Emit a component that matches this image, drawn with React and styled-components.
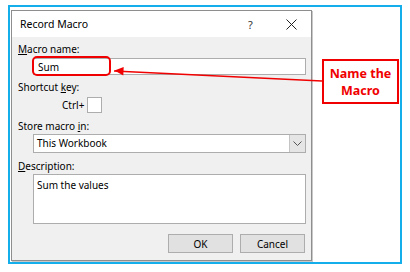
import React from 'react'
import styled, { createGlobalStyle } from 'styled-components'

const GlobalStyle = createGlobalStyle`
    html, body {
        margin: 0;
        background: #ffffff;
    }
    body {
        font-family: "Noto Sans", "Open Sans", sans-serif;
        color: #000000;
    }
`

function App() {
    return (
        <>
            <GlobalStyle />
            <Frame>
                <Dialog>
                    <TitleBar>
                        <Title>Record Macro</Title>
                        <Help>?</Help>
                        <Close>
                            <svg width="11" height="11" viewBox="0 0 11 11">
                                <path d="M0.5 0.5 L10.5 10.5 M10.5 0.5 L0.5 10.5" stroke="#222" strokeWidth="1" fill="none" />
                            </svg>
                        </Close>
                    </TitleBar>
                    <Body>
                        <Label><u>M</u>acro name:</Label>
                        <TextBox readOnly value="Sum" />
                        <Label $gap={6}>Shortcut <u>k</u>ey:</Label>
                        <CtrlRow>
                            <span>Ctrl+</span>
                            <KeyBox />
                        </CtrlRow>
                        <Label $gap={7}>Store macro <u>i</u>n:</Label>
                        <Select>
                            <SelectValue>This Workbook</SelectValue>
                            <DropButton>
                                <svg width="9" height="6" viewBox="0 0 9 6">
                                    <path d="M0.5 0.5 L4.5 4.5 L8.5 0.5" stroke="#555" strokeWidth="1" fill="none" />
                                </svg>
                            </DropButton>
                        </Select>
                        <Label $gap={7}><u>D</u>escription:</Label>
                        <TextArea readOnly value="Sum the values" />
                        <Buttons>
                            <Button>OK</Button>
                            <Button>Cancel</Button>
                        </Buttons>
                    </Body>
                </Dialog>
                <Callout>
                    <span>Name the</span>
                    <span>Macro</span>
                </Callout>
                <Annotation width="390" height="256" viewBox="10 7 390 256">
                    <rect x="33" y="57" width="77" height="18" rx="4" ry="4" fill="none" stroke="#f00000" strokeWidth="2" />
                    <line x1="114" y1="71" x2="322" y2="81" stroke="#f00000" strokeWidth="1.5" />
                    <polygon points="114.5,70.5 123.7,66.9 123.3,75.4" fill="#f00000" />
                </Annotation>
            </Frame>
        </>
    )
}

export default App

const Frame = styled.div`
    position: relative;
    box-sizing: border-box;
    width: 394px;
    height: 259px;
    margin: 5px 0 0 8px;
    border: 2px solid #14aeea;
    padding: 3px 0 0 1px;
    display: flex;
    align-items: flex-start;
    gap: 10px;
`

const Dialog = styled.div`
    box-sizing: border-box;
    width: 301px;
    height: 251px;
    border: 1px solid #8e8e8e;
    box-shadow: 1px 1px 0 #c8c8c8;
    background: #f0f0f0;
    display: flex;
    flex-direction: column;
    font-size: 10px;
`

const TitleBar = styled.div`
    height: 26px;
    background: #ffffff;
    display: flex;
    align-items: center;
    padding-left: 8px;
`

const Title = styled.div`
    font-size: 10.5px;
    flex: 1;
`

const Help = styled.div`
    font-size: 11px;
    color: #333;
    width: 6px;
    margin-right: 32px;
`

const Close = styled.div`
    display: flex;
    margin-right: 14px;
`

const Body = styled.div`
    flex: 1;
    display: flex;
    flex-direction: column;
    padding: 6px 5px 0 6px;
`

const Label = styled.div`
    height: 13px;
    line-height: 13px;
    margin-top: ${p => p.$gap || 0}px;
    margin-bottom: ${p => (p.$gap ? 0 : 2)}px;
`

const TextBox = styled.input`
    box-sizing: border-box;
    margin: 0 0 0 15px;
    height: 17px;
    border: 1px solid #adadad;
    background: #fff;
    padding: 0 4px;
    font: inherit;
    font-size: 10px;
    outline: none;
`

const CtrlRow = styled.div`
    display: flex;
    align-items: center;
    gap: 3px;
    margin: 3px 0 0 44px;
    height: 16px;
`

const KeyBox = styled.div`
    box-sizing: border-box;
    width: 15px;
    height: 16px;
    border: 1px solid #adadad;
    background: #fff;
`

const Select = styled.div`
    box-sizing: border-box;
    margin: 1px 0 0 15px;
    height: 19px;
    border: 1px solid #adadad;
    background: #fff;
    display: flex;
`

const SelectValue = styled.div`
    flex: 1;
    padding-left: 3px;
    line-height: 17px;
`

const DropButton = styled.div`
    width: 15px;
    background: #e5e5e5;
    border-left: 1px solid #c4c4c4;
    display: flex;
    align-items: center;
    justify-content: center;
`

const TextArea = styled.textarea`
    box-sizing: border-box;
    margin: 1px 0 0 15px;
    height: 50px;
    border: 1px solid #adadad;
    background: #fff;
    padding: 3px 3px;
    font: inherit;
    font-size: 10px;
    resize: none;
    outline: none;
`

const Buttons = styled.div`
    display: flex;
    justify-content: flex-end;
    gap: 7px;
    margin-top: 10px;
    padding-right: 1px;
`

const Button = styled.button`
    box-sizing: border-box;
    width: 65px;
    height: 19px;
    border: 1px solid #adadad;
    background: #e1e1e1;
    font: inherit;
    font-size: 10px;
    color: #000;
    padding: 0;
`

const Callout = styled.div`
    box-sizing: border-box;
    width: 77px;
    height: 45px;
    margin-top: 49px;
    border: 2px solid #f00000;
    background: #fff;
    color: #f00000;
    font-weight: bold;
    font-size: 12.5px;
    line-height: 17px;
    display: flex;
    flex-direction: column;
    align-items: center;
    justify-content: center;
`

const Annotation = styled.svg`
    position: absolute;
    left: 0;
    top: 0;
    pointer-events: none;
`
